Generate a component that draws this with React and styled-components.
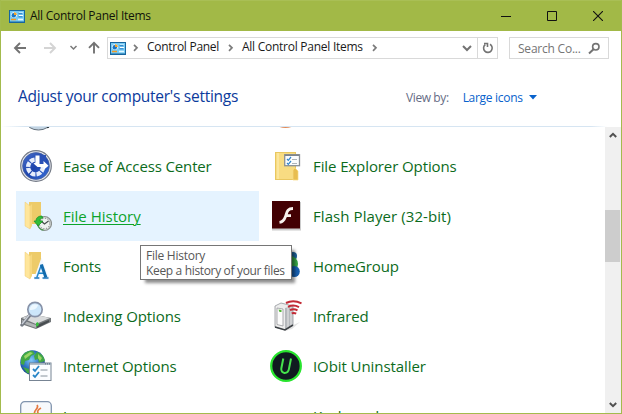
import React from "react";
import styled, { createGlobalStyle } from "styled-components";

const GlobalStyle = createGlobalStyle`
  *, *::before, *::after { box-sizing: border-box; }
  body { margin: 0; overflow: hidden; background: #fff; }
`;

const Window = styled.div`
  position: relative;
  display: flex;
  flex-direction: column;
  width: 622px;
  height: 414px;
  overflow: hidden;
  background: #fff;
  border: 1px solid #a3bb4d;
  border-top: 0;
  font-family: "Open Sans", "Noto Sans", sans-serif;
  font-size: 12px;
  color: #1a1a1a;
  svg { display: block; flex: none; }
`;

const Label = styled.span`
  white-space: nowrap;
  letter-spacing: ${(p) => p.$track || 0}px;
`;

const TitleBar = styled.header`
  display: flex;
  flex: none;
  align-items: center;
  height: 31px;
  padding-left: 8px;
  background: #a2b947;
  border-top: 1px solid #a9bf55;
  color: #10130a;
`;

const TitleText = styled(Label)`
  margin-left: 5px;
  padding-bottom: 1px;
  flex: 1;
`;

const CaptionButton = styled.button`
  display: flex;
  align-items: center;
  justify-content: center;
  width: 46px;
  height: 30px;
  padding: 0 0 1px;
  border: 0;
  background: none;
`;

const NavBar = styled.nav`
  display: flex;
  flex: none;
  align-items: flex-start;
  height: 35px;
  padding: 6px 12px 0 12px;
`;

const NavButtons = styled.div`
  display: flex;
  width: 94px;
  height: 22px;
`;

const AddressBar = styled.div`
  display: flex;
  align-items: center;
  width: 391px;
  height: 22px;
  padding-left: 2px;
  border: 1px solid #d9d9d9;
`;

const Crumb = styled(Label)`
  width: ${(p) => p.$width}px;
  line-height: 18px;
  padding-bottom: 2px;
`;

const AddressButton = styled.div`
  display: flex;
  align-items: center;
  justify-content: center;
  width: 20px;
  height: 20px;
  margin-left: ${(p) => (p.$push ? "auto" : 0)};
  border-left: ${(p) => (p.$divided ? "1px solid #d9d9d9" : "0")};
`;

const SearchBox = styled.div`
  display: flex;
  align-items: center;
  justify-content: space-between;
  width: 100px;
  height: 22px;
  margin-left: 11px;
  padding: 0 7px 0 8px;
  border: 1px solid #d9d9d9;
  color: #757575;
`;

const Heading = styled.section`
  display: flex;
  flex: none;
  align-items: center;
  height: 60px;
  padding-left: 17px;
`;

const PageTitle = styled.h1`
  width: 388px;
  margin: 0;
  font-size: 15.5px;
  font-weight: 400;
  line-height: 22px;
  color: #0b3a9c;
`;

const ViewBy = styled.div`
  display: flex;
  align-items: center;
  padding-top: 3px;
  color: #666c85;
`;

const ViewChoice = styled.div`
  display: flex;
  align-items: center;
  margin-left: 14px;
  gap: 6px;
  color: #0862cc;
`;

const Separator = styled.div`
  flex: none;
  height: 1px;
  background: linear-gradient(90deg, #fff, #d6e5f2 24px, #d6e5f2 590px, #fff 606px);
`;

const Body = styled.main`
  display: flex;
  flex: 1;
  min-height: 0;
`;

const ItemView = styled.div`
  flex: 1;
  overflow: hidden;
`;

const ItemGrid = styled.div`
  display: grid;
  grid-template-columns: 243px 243px;
  grid-auto-rows: 50px;
  column-gap: 7px;
  margin: -36px 0 0 15px;
`;

const Item = styled.div`
  display: flex;
  align-items: center;
  gap: 11px;
  padding-left: 4px;
  font-size: 15px;
  color: ${(p) => (p.$hot ? "#0ca32b" : "#0c6b1c")};
  background: ${(p) => (p.$hot ? "#e5f3ff" : "transparent")};
`;

const ItemName = styled(Label)`
  line-height: 20px;
  text-decoration: ${(p) => (p.$hot ? "underline" : "none")};
  text-decoration-thickness: 1px;
  text-underline-offset: 2px;
`;

const ScrollTrack = styled.div`
  display: flex;
  flex-direction: column;
  width: 16px;
  background: #f0f0f0;
`;

const ScrollArrow = styled.div`
  display: flex;
  align-items: center;
  justify-content: center;
  height: 17px;
`;

const ScrollThumb = styled.div`
  width: 15px;
  height: 52px;
  margin: 66px 0 auto;
  background: #cdcdcd;
`;

const Tooltip = styled.div`
  position: absolute;
  left: 139px;
  top: 245px;
  display: flex;
  flex-direction: column;
  width: 152px;
  height: 35px;
  padding: 2px 0 0 5px;
  border: 1px solid #767676;
  background: #fff;
  box-shadow: 4px 4px 3px -1px rgba(0, 0, 0, 0.45);
  line-height: 15px;
  color: #575757;
`;

const PanelIcon = () => (
  <svg width="16" height="13" viewBox="0 0 16 13">
    <rect width="16" height="13" fill="#17669f" />
    <rect x="1" y="1" width="14" height="10.5" fill="#79ccf5" />
    <circle cx="5" cy="5" r="2.8" fill="#fff" />
    <circle cx="4.8" cy="5.2" r="2.2" fill="#1975c5" />
    <path d="M5 5V2.3A2.8 2.8 0 0 1 7.8 5Z" fill="#f2a22a" />
    <path d="M10 2.5h4v1h-4zM10 5h4v1.2h-4z" fill="#fff" />
    <path d="M9.5 3.7h4M9.5 6.8h4" stroke="#1975c5" />
    <path d="M2 9.5h5" stroke="#f29a22" strokeWidth="1.5" />
    <path d="M9 9.5h5" stroke="#e4f8ff" strokeWidth="1.5" />
  </svg>
);

const Chevron = () => (
  <svg width="21" height="20" viewBox="0 0 21 20">
    <path d="M8 6.8l3 3-3 3" fill="none" stroke="#7b7b7b" strokeWidth="1.7" />
  </svg>
);

const NavArrows = () => (
  <svg width="94" height="22" viewBox="0 0 94 22" fill="none" strokeWidth="1.9">
    <path d="M13 11H2M7 6l-5 5 5 5" stroke="#737373" />
    <path d="M31 11h11M37 6l5 5-5 5" stroke="#d4d4d4" />
    <path d="M57.5 9l3 3 3-3" stroke="#7a7a7a" strokeWidth="1.5" />
    <path d="M81 16.5V6M76 10.8l5-5 5 5" stroke="#737373" />
  </svg>
);

const EaseIcon = () => (
  <svg width="32" height="32" viewBox="0 0 32 32">
    <defs>
      <linearGradient id="easeBlue" x1="0" y1="0" x2="1" y2="1">
        <stop stopColor="#4a72cf" /><stop offset=".5" stopColor="#1d43ab" /><stop offset="1" stopColor="#3972dd" />
      </linearGradient>
    </defs>
    <circle cx="16" cy="16" r="15.3" fill="#e2e5ec" stroke="#757b87" strokeWidth="1.2" />
    <circle cx="16" cy="16" r="13.4" fill="url(#easeBlue)" stroke="#435d9c" strokeWidth=".7" />
    <circle cx="15.5" cy="17" r="7.4" fill="none" stroke="#e7eefc" strokeWidth="4.4" strokeDasharray="4.7 1.11" />
    <path d="M16 5h10v9H16z" fill="#2950b6" />
    <path d="M15.5 5.5h4V14h4v-3l5 4.8-5 4.2v-3h-6l-4-3.5 2-1z" fill="#fff" />
  </svg>
);

const Folder = () => (
  <>
    <path d="M9 2h12v22H9z" fill="#edcb69" />
    <path d="M5 2l5 4v23l-5-3z" fill="#ffe69b" stroke="#eccb75" strokeWidth=".5" />
    <path d="M10 6l2-2v22l-2 3z" fill="#f6d77e" />
  </>
);

const HistoryIcon = () => (
  <svg width="32" height="32" viewBox="0 0 32 32">
    <Folder />
    <circle cx="24.5" cy="23.5" r="7" fill="#d4d8d7" stroke="#8b9190" strokeWidth="1.2" />
    <circle cx="24.5" cy="23.5" r="5.2" fill="#eef1f0" stroke="#727877" strokeWidth="1" strokeDasharray="1 1.7" />
    <path d="M21 21l3.5 3 4-3" fill="none" stroke="#454d4b" strokeWidth="1.2" />
    <path d="M22 16c-4 0-6 2-6 5h-2l4 5 5-5h-3c0-2 1-3 3-3z" fill="#31bd38" stroke="#158d28" strokeWidth=".7" />
    <path d="M17.5 24c1 4 3 6 6 6" fill="none" stroke="#2a9630" />
  </svg>
);

const FontsIcon = () => (
  <svg width="32" height="32" viewBox="0 0 32 32">
    <Folder />
    <path d="M14 28h6M23 28h6M16.5 27.5l5-14 5 14M18 23h7" fill="none" stroke="#f1f7ff" strokeWidth="4" />
    <path d="M14.3 28h5M22.5 28h6" stroke="#1b75ba" strokeWidth="1.4" />
    <path d="M16.7 27.8l4.7-13M18 23.3h6" fill="none" stroke="#2387cb" strokeWidth="1.5" />
    <path d="M21.4 14.5l4.5 13" stroke="#126bad" strokeWidth="3" />
  </svg>
);

const IndexIcon = () => (
  <svg width="32" height="32" viewBox="0 0 32 32">
    <path d="M1 18l10-4 20 4v4L16 29 1 24z" fill="#73777a" />
    <path d="M2 18l10-4 18 4-14 6z" fill="#d9dbdc" />
    <path d="M2 20v3l14 5v-3z" fill="#b1b4b6" />
    <path d="M17 25l12-5v2l-12 6z" fill="#484d50" />
    <path d="M16 23l2-1 1 3-3 2z" fill="#39bf3f" />
    <path d="M10 15l-8 10" stroke="#747a83" strokeWidth="3.4" strokeLinecap="round" />
    <path d="M10 14l-8 10" stroke="#cbd0d9" strokeWidth="1.3" />
    <circle cx="15" cy="9.5" r="7.2" fill="#cce6fa" stroke="#8792a8" strokeWidth="1.7" />
    <path d="M10 8c1-3 4-5 8-3-1 4-4 5-8 5z" fill="#edf8ff" />
  </svg>
);

const InternetIcon = () => (
  <svg width="32" height="32" viewBox="0 0 32 32">
    <defs>
      <radialGradient id="ocean" cx=".45" cy=".4" r=".65">
        <stop stopColor="#82c9fa" /><stop offset=".5" stopColor="#3178c5" /><stop offset="1" stopColor="#133c83" />
      </radialGradient>
    </defs>
    <circle cx="12.5" cy="12.5" r="12.3" fill="url(#ocean)" />
    <path d="M1 8C3 3 8 0 13 1l2 3-4 2-2 4-4 1-1 4-3-1zM3 17l6 2 3 5-5-1zM17 2c4 1 7 4 8 9l-6 2-1-4-3 1-1-4z" fill="#41a746" />
    <path d="M4 6l6-4 3 1-4 3-4 3zM18 4l4 4-2 3-2-3z" fill="#9bd667" />
    <rect x="9.5" y="13" width="21.5" height="17.5" fill="#fbfdff" stroke="#778493" />
    <path d="M10 14h21" stroke="#9dacba" strokeWidth="1.5" />
    <path d="M25 13.9h5" stroke="#4f6478" strokeDasharray="1 1" />
    <path d="M13 19l2 2 4-5M13 25l2 2 4-5" fill="none" stroke="#2685c7" strokeWidth="1.8" />
    <path d="M20.5 20h7M20.5 26h7" stroke="#86929c" />
  </svg>
);

const JavaIcon = () => (
  <svg width="32" height="32" viewBox="0 0 32 32">
    <rect x=".7" y="1.7" width="30.6" height="30" rx="4" fill="#f7f9fc" stroke="#8194ae" strokeWidth="1.3" />
    <path d="M17 5c3 4-5 5-2 10M21 8c-4 2-4 4-2 7" fill="none" stroke="#e57942" strokeWidth="1.7" />
  </svg>
);

const DateIcon = () => (
  <svg width="32" height="32" viewBox="0 0 32 32">
    <ellipse cx="18.5" cy="22" rx="12" ry="8" fill="#c2d3e1" stroke="#65717c" />
    <path d="M27 27.5l2-.5" stroke="#263238" strokeWidth="1.5" />
  </svg>
);

const OrangeIcon = () => (
  <svg width="32" height="32" viewBox="0 0 32 32">
    <ellipse cx="15.5" cy="20" rx="12" ry="8" fill="#e08a58" />
  </svg>
);

const ExplorerIcon = () => (
  <svg width="32" height="32" viewBox="0 0 32 32">
    <rect x="5.5" y="2.5" width="20" height="27" fill="#f8dc82" stroke="#e9c760" />
    <path d="M8 3v26" stroke="#fff0b8" />
    <path d="M23 30V20l2-2 3 3v9z" fill="#e8bd50" stroke="#f8da83" strokeWidth=".7" />
    <rect x="14.7" y="4.7" width="14.8" height="11" fill="#fbfcfd" stroke="#8a9096" strokeWidth="1.3" />
    <path d="M15 5.3h14" stroke="#7f858b" strokeWidth="1.4" />
    <path d="M17 9l1.3 1.3L21 7M17 13l1.3 1.3L21 11" fill="none" stroke="#3386cb" strokeWidth="1.2" />
    <path d="M22 9.5h5M22 13.5h5" stroke="#adb4ba" />
  </svg>
);

const FlashIcon = () => (
  <svg width="32" height="32" viewBox="0 0 32 32">
    <rect x="2" y="2" width="29" height="28.5" fill="#aaa" opacity=".6" />
    <rect x="2" y="1" width="28" height="27.5" fill="#430003" />
    <path d="M23 8.5c-6 0-6 4-7.5 8-1.2 3.5-2.7 5.5-6 5.8M15 15.7h6" fill="none" stroke="#f8f1ed" strokeWidth="2.8" />
  </svg>
);

const HomeGroupIcon = () => (
  <svg width="32" height="32" viewBox="0 0 32 32">
    <circle cx="23" cy="6" r="4" fill="#1c659e" />
    <circle cx="20" cy="14" r="8" fill="#38a647" />
    <circle cx="24.3" cy="21.5" r="5.5" fill="#175fae" />
    <circle cx="10" cy="20" r="7" fill="#3a8acb" />
  </svg>
);

const InfraredIcon = () => (
  <svg width="32" height="32" viewBox="0 0 32 32">
    <path d="M21 26l9-4-8 7-7 2z" fill="#e4e4e4" />
    <path d="M5 6l6-3 12 3v19l-8 5-10-3z" fill="#ededed" stroke="#92969a" strokeWidth=".8" />
    <path d="M15 8l8-2v19l-8 5z" fill="#b5b8bc" />
    <path d="M18 8v20M21 7v19" stroke="#e9e9e9" />
    <path d="M7 8l6 1v17l-6-1.5z" fill="#fbfbfb" stroke="#8c8e92" strokeWidth=".7" />
    <path d="M5 27l10 3 8-5" fill="none" stroke="#3d4145" strokeWidth="1.6" />
    <path d="M8.5 9.5l3 .5v2h-2z" fill="#51b735" />
    <path d="M16 3c5-2.6 10-2.4 15.5.3M18 6.8c4-2 7-1.8 11 .3M20 10.2c2.6-1.3 5-1.2 7.5.2M21.7 13.4c1.5-.7 3-.6 4.5.2" fill="none" stroke="#c22a35" strokeWidth="2" />
  </svg>
);

const IObitIcon = () => (
  <svg width="32" height="32" viewBox="0 0 32 32">
    <circle cx="16" cy="16" r="14.8" fill="#101b20" stroke="#28e42e" strokeWidth="2.3" />
    <path d="M13.3 8.5l-2 10c-.8 5.5 6.5 6 7.6.6l2.1-10.6" fill="none" stroke="#45e44c" strokeWidth="2" />
  </svg>
);

const BlankIcon = () => <svg width="32" height="32" />;

const ITEMS = [
  { icon: DateIcon, name: "" },
  { icon: OrangeIcon, name: "" },
  { icon: EaseIcon, name: "Ease of Access Center", track: -0.14 },
  { icon: ExplorerIcon, name: "File Explorer Options", track: -0.1 },
  { icon: HistoryIcon, name: "File History", hot: true, track: 0 },
  { icon: FlashIcon, name: "Flash Player (32-bit)", track: 0.08 },
  { icon: FontsIcon, name: "Fonts", track: -0.1 },
  { icon: HomeGroupIcon, name: "HomeGroup", track: -0.1 },
  { icon: IndexIcon, name: "Indexing Options", track: -0.08 },
  { icon: InfraredIcon, name: "Infrared", track: -0.15 },
  { icon: InternetIcon, name: "Internet Options", track: -0.12 },
  { icon: IObitIcon, name: "IObit Uninstaller", track: -0.08 },
  { icon: JavaIcon, name: "Java", track: -0.1 },
  { icon: BlankIcon, name: "Keyboard", track: -0.1 },
];

export default function App() {
  return (
    <Window>
      <GlobalStyle />
      <TitleBar>
        <PanelIcon />
        <TitleText $track={-0.26}>All Control Panel Items</TitleText>
        <CaptionButton aria-label="Minimize">
          <svg width="10" height="10"><path d="M0 5.5h10" stroke="#111" /></svg>
        </CaptionButton>
        <CaptionButton aria-label="Maximize">
          <svg width="10" height="10"><path d="M.5.5h9v9h-9z" fill="none" stroke="#111" /></svg>
        </CaptionButton>
        <CaptionButton aria-label="Close">
          <svg width="10" height="10"><path d="M0 0l10 10M10 0L0 10" stroke="#111" strokeWidth="1.1" /></svg>
        </CaptionButton>
      </TitleBar>
      <NavBar>
        <NavButtons><NavArrows /></NavButtons>
        <AddressBar>
          <PanelIcon />
          <Chevron />
          <Crumb $width={74} $track={-0.28}>Control Panel</Crumb>
          <Chevron />
          <Crumb $width={123} $track={-0.26}>All Control Panel Items</Crumb>
          <Chevron />
          <AddressButton $push>
            <svg width="10" height="8"><path d="M1 2l4 4 4-4" fill="none" stroke="#737373" strokeWidth="2" /></svg>
          </AddressButton>
          <AddressButton $divided>
            <svg width="12" height="12" viewBox="0 0 12 12" fill="none" stroke="#737373" strokeWidth="1.6">
              <path d="M8 2.3a4.3 4.3 0 1 1-4.7.3M2 1.5h3.5V5" />
            </svg>
          </AddressButton>
        </AddressBar>
        <SearchBox>
          <Label $track={-0.22}>Search Co...</Label>
          <svg width="13" height="13" viewBox="0 0 13 13" fill="none" stroke="#737373">
            <circle cx="7.8" cy="4.8" r="3.2" strokeWidth="1.6" /><path d="M5.5 7.2L1 11.5" strokeWidth="2" />
          </svg>
        </SearchBox>
      </NavBar>
      <Heading>
        <PageTitle><Label $track={-0.27}>Adjust your computer's settings</Label></PageTitle>
        <ViewBy>
          <Label $track={-0.4}>View by:</Label>
          <ViewChoice>
            <Label $track={-0.3}>Large icons</Label>
            <svg width="8" height="5"><path d="M0 0h8L4 4.5z" fill="#0862cc" /></svg>
          </ViewChoice>
        </ViewBy>
      </Heading>
      <Separator />
      <Body>
        <ItemView>
          <ItemGrid>
            {ITEMS.map(({ icon: Icon, name, hot, track }, i) => (
              <Item key={i} $hot={hot}>
                <Icon />
                <ItemName $hot={hot} $track={track}>{name}</ItemName>
              </Item>
            ))}
          </ItemGrid>
        </ItemView>
        <ScrollTrack>
          <ScrollArrow>
            <svg width="8" height="7"><path d="M.8 5L4 1.8 7.2 5" fill="none" stroke="#505050" strokeWidth="2" /></svg>
          </ScrollArrow>
          <ScrollThumb />
          <ScrollArrow>
            <svg width="8" height="7"><path d="M.8 2L4 5.2 7.2 2" fill="none" stroke="#505050" strokeWidth="2" /></svg>
          </ScrollArrow>
        </ScrollTrack>
      </Body>
      <Tooltip>
        <Label $track={-0.25}>File History</Label>
        <Label $track={-0.34}>Keep a history of your files</Label>
      </Tooltip>
    </Window>
  );
}
